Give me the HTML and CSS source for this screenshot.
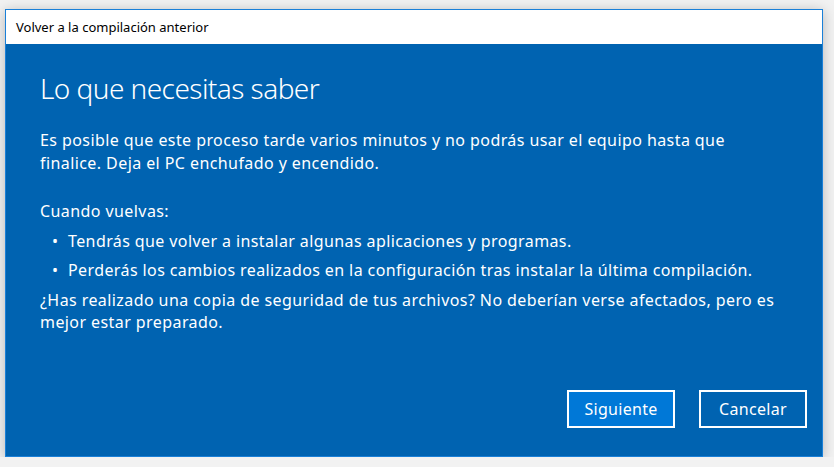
FILE: index.html
```html
<!DOCTYPE html>
<html lang="es">

<head>
    <meta charset="UTF-8">
    <title>Volver a la compilación anterior</title>
    <link rel="stylesheet" href="styles.css">
</head>

<body>
    <div class="ventana">
        <div class="titulo">Volver a la compilación anterior</div>

        <div class="contenido">
            <h1>Lo que necesitas saber</h1>

            <p class="intro">Es posible que este proceso tarde varios minutos y no podrás usar el equipo hasta que<br>finalice. Deja el PC enchufado y encendido.</p>

            <p class="cuando">Cuando vuelvas:</p>
            <ul>
                <li>Tendrás que volver a instalar algunas aplicaciones y programas.</li>
                <li>Perderás los cambios realizados en la configuración tras instalar la última compilación.</li>
            </ul>

            <p class="copia">¿Has realizado una copia de seguridad de tus archivos? No deberían verse afectados, pero es<br>mejor estar preparado.</p>

            <div class="botones">
                <button class="principal">Siguiente</button>
                <button>Cancelar</button>
            </div>
        </div>
    </div>
</body>

</html>
```

FILE: styles.css
```css
body {
    margin: 0;
    background-color: #f2f2f2;
    font-family: "Noto Sans", "Open Sans", sans-serif;
}

.ventana {
    margin: 9px 0 0 5px;
    width: 816px;
    height: 446px;
    border: 1px solid #1a80d8;
    display: flex;
    flex-direction: column;
    box-shadow: 0 2px 12px rgba(0, 0, 0, 0.25);
}

.titulo {
    height: 34px;
    background-color: #fff;
    color: #000;
    font-size: 13px;
    line-height: 34px;
    padding-left: 10px;
}

.contenido {
    flex: 1;
    background-color: #0063b1;
    color: #fff;
    padding: 24px 15px 28px 34px;
    display: flex;
    flex-direction: column;
}

h1 {
    margin: 0;
    font-size: 28px;
    font-weight: 300;
    letter-spacing: -0.55px;
    line-height: 40px;
}

p {
    margin: 0;
    font-size: 16px;
    letter-spacing: 0.42px;
    line-height: 22.5px;
}

.intro {
    margin-top: 21px;
}

.cuando {
    margin-top: 26px;
}

ul {
    list-style: none;
    margin: 7px 0 0;
    padding: 0;
}

ul li {
    font-size: 16px;
    letter-spacing: 0.4px;
    line-height: 22.5px;
    padding-left: 28px;
    margin-bottom: 7px;
    position: relative;
}

ul li::before {
    content: "•";
    position: absolute;
    left: 12px;
}

.botones {
    margin-top: auto;
    display: flex;
    justify-content: flex-end;
    gap: 24px;
}

button {
    width: 108px;
    height: 38px;
    border: 2px solid #fff;
    background-color: #0063b1;
    color: #fff;
    font-family: inherit;
    font-size: 16px;
    letter-spacing: 0.3px;
    padding: 0;
}

button.principal {
    background-color: #0078d7;
}
```
